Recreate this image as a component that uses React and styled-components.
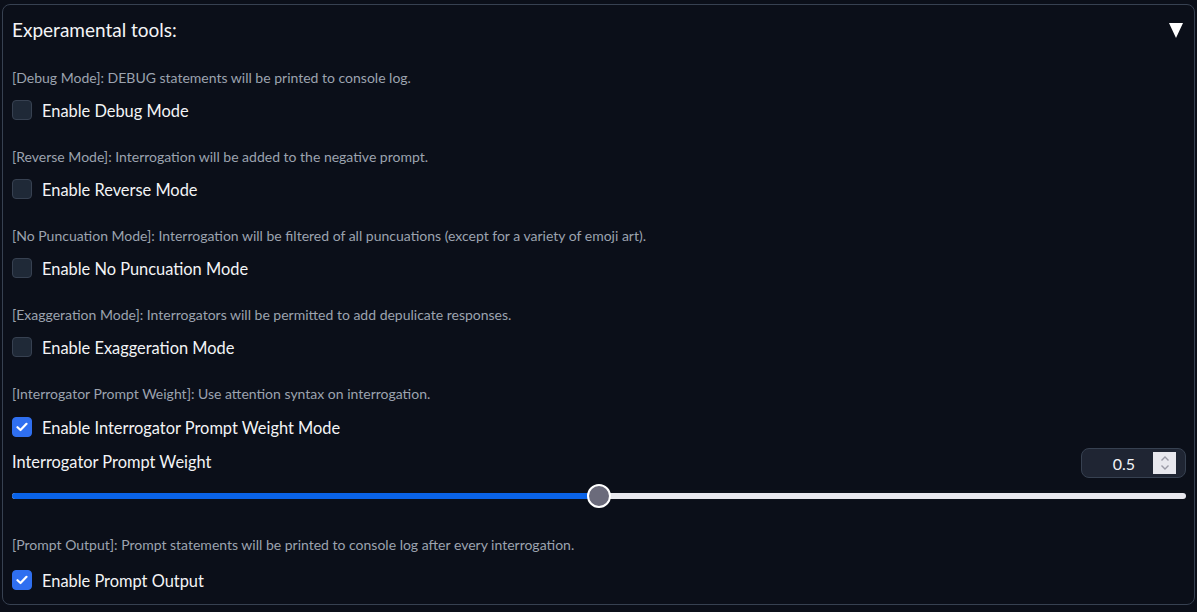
import styled, { createGlobalStyle } from "styled-components";

const GlobalStyle = createGlobalStyle`
  html, body {
    margin: 0;
    padding: 0;
    background: #0b0f19;
  }
  body {
    font-family: "Lato", "Noto Sans", sans-serif;
    color: #e5e7eb;
  }
`;

const StyledPanel = styled.div`
  margin: 4px 2px 0 2px;
  border: 1px solid #374151;
  border-radius: 8px;
  padding: 0 8px 14px 9px;
  background: #0b0f19;
`;

const StyledHeader = styled.div`
  display: flex;
  justify-content: space-between;
  align-items: center;
  height: 50px;
  margin-bottom: 13px;
`;

const StyledTitle = styled.span`
  font-size: 19px;
  color: #f3f4f6;
  line-height: 24px;
`;

const StyledArrow = styled.span`
  width: 0;
  height: 0;
  border-left: 7.5px solid transparent;
  border-right: 7.5px solid transparent;
  border-top: 15px solid #ffffff;
  margin-right: 3px;
  margin-top: 1px;
`;

const StyledBlock = styled.div`
  display: flex;
  flex-direction: column;
  gap: ${(props) => props.$gap || 12}px;
  margin-bottom: ${(props) => props.$after ?? 27}px;
`;

const StyledInfo = styled.p`
  margin: 0;
  font-size: 14px;
  line-height: 20px;
  color: #9ca3af;
`;

const StyledRow = styled.label`
  display: flex;
  align-items: center;
  gap: 10px;
  height: 20px;
  cursor: pointer;
`;

const StyledBox = styled.span`
  box-sizing: border-box;
  width: 20px;
  height: 20px;
  border-radius: 4px;
  display: flex;
  align-items: center;
  justify-content: center;
  background: ${(props) => (props.$checked ? "#2f6ff0" : "#1f2937")};
  border: 1px solid ${(props) => (props.$checked ? "#2f6ff0" : "#374151")};
`;

const StyledLabel = styled.span`
  font-size: 16.4px;
  color: #f3f4f6;
`;

const StyledSliderLabel = styled(StyledLabel)`
  margin-bottom: 3px;
`;

const StyledSliderHead = styled.div`
  display: flex;
  justify-content: space-between;
  align-items: center;
  margin-top: 11px;
  height: 30px;
`;

const StyledNumber = styled.div`
  box-sizing: border-box;
  width: 105px;
  height: 30px;
  border: 1px solid #374151;
  background: #1f2533;
  border-radius: 8px;
  display: flex;
  align-items: center;
  justify-content: flex-end;
  padding-right: 9px;
  gap: 18px;
  font-size: 16px;
  color: #f3f4f6;
`;

const StyledSpinner = styled.span`
  width: 23px;
  height: 22px;
  background: #e8e8ee;
  display: flex;
  align-items: center;
  justify-content: center;
`;

const StyledTrack = styled.div`
  position: relative;
  height: 6px;
  margin: 15px 0 0 0;
  background: #e8e8ee;
  border-radius: 3px;
`;

const StyledFill = styled.div`
  height: 100%;
  background: #0a63e8;
  border-radius: 3px 0 0 3px;
`;

const StyledThumb = styled.div`
  position: absolute;
  top: 50%;
  width: 20px;
  height: 20px;
  border-radius: 50%;
  background: #6b6b7b;
  border: 2px solid #ffffff;
  transform: translate(-50%, -50%);
`;

const modes = [
  {
    info: "[Debug Mode]: DEBUG statements will be printed to console log.",
    label: "Enable Debug Mode",
    checked: false,
  },
  {
    info: "[Reverse Mode]: Interrogation will be added to the negative prompt.",
    label: "Enable Reverse Mode",
    checked: false,
  },
  {
    info: "[No Puncuation Mode]: Interrogation will be filtered of all puncuations (except for a variety of emoji art).",
    label: "Enable No Puncuation Mode",
    checked: false,
  },
  {
    info: "[Exaggeration Mode]: Interrogators will be permitted to add depulicate responses.",
    label: "Enable Exaggeration Mode",
    checked: false,
  },
];

function Check({ checked }) {
  return (
    <StyledBox $checked={checked}>
      {checked && (
        <svg width="12" height="10" viewBox="0 0 12 10">
          <path
            d="M1.5 5.2 L4.5 8 L10.5 1.8"
            fill="none"
            stroke="#ffffff"
            strokeWidth="2.2"
            strokeLinecap="round"
            strokeLinejoin="round"
          />
        </svg>
      )}
    </StyledBox>
  );
}

function CheckRow({ label, checked }) {
  return (
    <StyledRow>
      <Check checked={checked} />
      <StyledLabel>{label}</StyledLabel>
    </StyledRow>
  );
}

export default function App() {
  const weight = 0.5;
  const percent = weight * 100;

  return (
    <>
      <GlobalStyle />
      <StyledPanel>
        <StyledHeader>
          <StyledTitle>Experamental tools:</StyledTitle>
          <StyledArrow />
        </StyledHeader>

        {modes.map((mode) => (
          <StyledBlock key={mode.label}>
            <StyledInfo>{mode.info}</StyledInfo>
            <CheckRow label={mode.label} checked={mode.checked} />
          </StyledBlock>
        ))}

        <StyledBlock $gap={13} $after={0}>
          <StyledInfo>
            [Interrogator Prompt Weight]: Use attention syntax on interrogation.
          </StyledInfo>
          <CheckRow label="Enable Interrogator Prompt Weight Mode" checked />
        </StyledBlock>

        <StyledSliderHead>
          <StyledSliderLabel>Interrogator Prompt Weight</StyledSliderLabel>
          <StyledNumber>
            0.5
            <StyledSpinner>
              <svg width="10" height="16" viewBox="0 0 10 16">
                <path
                  d="M1.5 5.5 L5 2 L8.5 5.5 M1.5 10.5 L5 14 L8.5 10.5"
                  fill="none"
                  stroke="#9a9aa6"
                  strokeWidth="1.4"
                />
              </svg>
            </StyledSpinner>
          </StyledNumber>
        </StyledSliderHead>

        <StyledTrack>
          <StyledFill style={{ width: `${percent}%` }} />
          <StyledThumb style={{ left: `${percent}%` }} />
        </StyledTrack>

        <StyledBlock $gap={15} $after={0} style={{ marginTop: 36 }}>
          <StyledInfo>
            [Prompt Output]: Prompt statements will be printed to console log
            after every interrogation.
          </StyledInfo>
          <CheckRow label="Enable Prompt Output" checked />
        </StyledBlock>
      </StyledPanel>
    </>
  );
}
